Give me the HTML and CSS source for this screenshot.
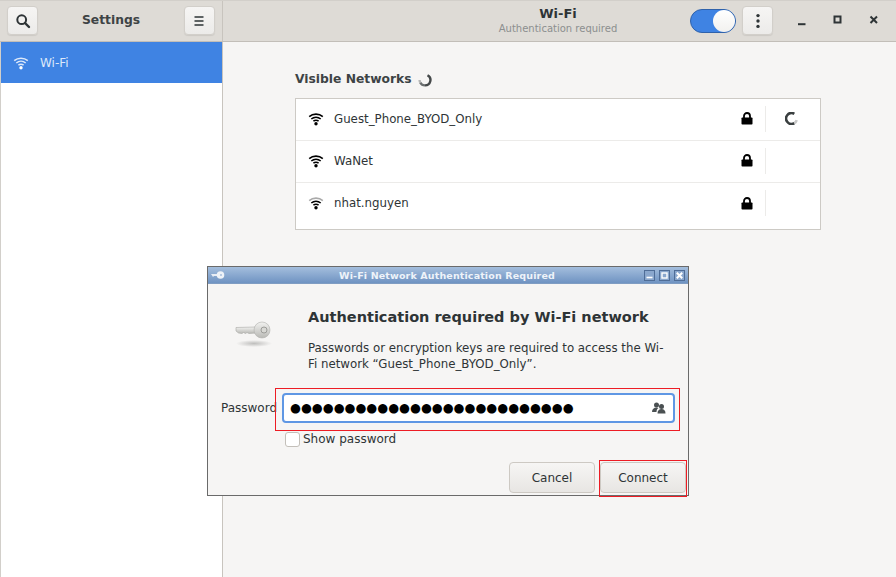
FILE: index.html
```html
<!DOCTYPE html>
<html lang="en">
<head>
<meta charset="utf-8">
<title>Settings - Wi-Fi</title>
<link rel="stylesheet" href="styles.css">
</head>
<body>
<div class="window">
  <header class="headerbar">
    <div class="head-left">
      <button class="hbtn"><svg width="16" height="16" viewBox="0 0 16 16"><circle cx="6.700" cy="6.700" r="4.400" fill="none" stroke="#2e3436" stroke-width="2"/><path d="M10 10l4 4" stroke="#2e3436" stroke-width="2.400" stroke-linecap="round"/></svg></button>
      <span class="app-title">Settings</span>
      <button class="hbtn"><svg width="16" height="16" viewBox="0 0 16 16"><path d="M3.500 4h9M3.500 8h9M3.500 12h9" stroke="#2e3436" stroke-width="1.700"/></svg></button>
    </div>
    <div class="head-right">
      <div class="title-block">
        <div class="title">Wi-Fi</div>
        <div class="subtitle">Authentication required</div>
      </div>
      <div class="switch"><span class="knob"></span></div>
      <button class="hbtn dots"><svg width="16" height="16" viewBox="0 0 16 16"><circle cx="8" cy="2.600" r="1.700" fill="#2e3436"/><circle cx="8" cy="8" r="1.700" fill="#2e3436"/><circle cx="8" cy="13.400" r="1.700" fill="#2e3436"/></svg></button>
      <div class="wm">
        <svg width="12" height="12" viewBox="0 0 12 12"><path d="M2 9.200h7.500" stroke="#2e3436" stroke-width="2"/></svg>
        <svg width="12" height="12" viewBox="0 0 12 12"><rect x="2.500" y="1.500" width="6" height="6" fill="none" stroke="#2e3436" stroke-width="2"/></svg>
        <svg width="12" height="12" viewBox="0 0 12 12"><path d="M2.500 1.500l6.500 6.500M9 1.500l-6.500 6.500" stroke="#2e3436" stroke-width="2"/></svg>
      </div>
    </div>
  </header>
  <div class="body">
    <aside class="sidebar">
      <div class="side-item">
        <svg class="wifi" width="16" height="16" viewBox="0 0 16 16"><path d="M1.200 5.600C5 2.300 11 2.300 14.800 5.600M3.300 8C6 5.800 10 5.800 12.700 8M5.400 10.200C6.900 9.100 9.100 9.100 10.600 10.200" fill="none" stroke="#dce8fa" stroke-width="1.500"/><circle cx="8" cy="12.800" r="1.700" fill="#fff"/></svg>
        <span>Wi-Fi</span>
      </div>
    </aside>
    <main class="content">
      <h2 class="section"><span>Visible Networks</span>
        <svg width="14" height="14" viewBox="0 0 14 14"><path d="M9.500 2.200A5.400 5.400 0 0 1 7 12.400" fill="none" stroke="#45494a" stroke-width="2.400"/><path d="M7 12.400A5.400 5.400 0 0 1 2.200 9.500" fill="none" stroke="#6a6e6f" stroke-width="2.400"/><path d="M2.200 9.500A5.400 5.400 0 0 1 1.600 7" fill="none" stroke="#b5b6b5" stroke-width="2.400"/></svg>
      </h2>
      <ul class="networks">
        <li class="net">
          <svg class="wifi" width="16" height="16" viewBox="0 0 16 16"><path d="M1.200 5.600C5 2.300 11 2.300 14.800 5.600M3.300 8C6 5.800 10 5.800 12.700 8M5.400 10.200C6.900 9.100 9.100 9.100 10.600 10.200" fill="none" stroke="#000" stroke-width="1.600"/><circle cx="8" cy="12.800" r="1.700"/></svg>
          <span class="name">Guest_Phone_BYOD_Only</span>
          <svg class="lock" width="12" height="13" viewBox="0 0 12 13"><path d="M3 6V4a3 3 0 0 1 6 0v2" fill="none" stroke="#000" stroke-width="1.800"/><rect x="0.500" y="5.500" width="11" height="7" rx="0.800"/></svg>
          <span class="spin"><svg width="13" height="13" viewBox="0 0 12 12"><path d="M8.600 1.700A5 5 0 1 0 8.600 10.300" fill="none" stroke="#3a3f40" stroke-width="2.400"/><path d="M8.600 10.300A5 5 0 0 0 10.800 7.500" fill="none" stroke="#c8c8c8" stroke-width="2.400"/></svg></span>
        </li>
        <li class="net">
          <svg class="wifi" width="16" height="16" viewBox="0 0 16 16"><path d="M1.200 5.600C5 2.300 11 2.300 14.800 5.600M3.300 8C6 5.800 10 5.800 12.700 8M5.400 10.200C6.900 9.100 9.100 9.100 10.600 10.200" fill="none" stroke="#000" stroke-width="1.600"/><circle cx="8" cy="12.800" r="1.700"/></svg>
          <span class="name">WaNet</span>
          <svg class="lock" width="12" height="13" viewBox="0 0 12 13"><path d="M3 6V4a3 3 0 0 1 6 0v2" fill="none" stroke="#000" stroke-width="1.800"/><rect x="0.500" y="5.500" width="11" height="7" rx="0.800"/></svg>
          <span class="spin"></span>
        </li>
        <li class="net">
          <svg class="wifi" width="16" height="16" viewBox="0 0 16 16"><path d="M1.200 5.600C5 2.300 11 2.300 14.800 5.600" fill="none" stroke="#aaa" stroke-width="1.600"/><path d="M3.300 8C6 5.800 10 5.800 12.700 8M5.400 10.200C6.900 9.100 9.100 9.100 10.600 10.200" fill="none" stroke="#000" stroke-width="1.600"/><circle cx="8" cy="12.800" r="1.700"/></svg>
          <span class="name">nhat.nguyen</span>
          <svg class="lock" width="12" height="13" viewBox="0 0 12 13"><path d="M3 6V4a3 3 0 0 1 6 0v2" fill="none" stroke="#000" stroke-width="1.800"/><rect x="0.500" y="5.500" width="11" height="7" rx="0.800"/></svg>
          <span class="spin"></span>
        </li>
      </ul>
    </main>
  </div>
</div>

<section class="dialog">
  <div class="dlg-title">
    <svg class="dlg-key" width="14" height="10" viewBox="0 0 14 10"><path d="M0 4h8v2H3L2 7z" fill="#e8edf4"/><circle cx="9.500" cy="5" r="3.800" fill="#eef2f7"/><circle cx="10" cy="5" r="1" fill="#a9bfdc"/></svg>
    <span class="dlg-caption">Wi-Fi Network Authentication Required</span>
    <span class="dlg-btns">
      <span class="dlg-btn"><svg width="9" height="9" viewBox="0 0 9 9"><path d="M1.500 6.500h6" stroke="#fff" stroke-width="1.600"/></svg></span>
      <span class="dlg-btn"><svg width="9" height="9" viewBox="0 0 9 9"><rect x="2" y="2" width="5" height="5" fill="none" stroke="#fff" stroke-width="1.400"/></svg></span>
      <span class="dlg-btn"><svg width="9" height="9" viewBox="0 0 9 9"><path d="M1.800 1.800l5.400 5.400M7.200 1.800l-5.400 5.400" stroke="#fff" stroke-width="2"/></svg></span>
    </span>
  </div>
  <div class="dlg-main">
    <div class="dlg-icon">
      <svg width="38" height="30" viewBox="0 0 38 30">
        <defs>
          <linearGradient id="k" x1="0" y1="0" x2="0" y2="1"><stop offset="0" stop-color="#f2f2f0"/><stop offset="1" stop-color="#b9b9b5"/></linearGradient>
          <radialGradient id="s"><stop offset="0" stop-color="#9a9a98" stop-opacity=".6"/><stop offset="1" stop-color="#9a9a98" stop-opacity="0"/></radialGradient>
        </defs>
        <ellipse cx="19" cy="24.500" rx="18" ry="3.500" fill="url(#s)"/>
        <path d="M1 8.500l20-.5v6l-7 .5-2-1-1.500 1-2-1-1.500 1-3.500-.5-2.500-2z" fill="url(#k)" stroke="#a8a8a4" stroke-width=".6"/>
        <circle cx="27" cy="11" r="8" fill="url(#k)" stroke="#b0b0ac" stroke-width=".6"/>
        <circle cx="29" cy="11" r="3" fill="#d8d8d4" stroke="#8e8e8a" stroke-width=".8"/>
      </svg>
    </div>
    <div class="dlg-text">
      <h1 class="dlg-head">Authentication required by Wi-Fi network</h1>
      <p class="dlg-para">Passwords or encryption keys are required to access the Wi-Fi network “Guest_Phone_BYOD_Only”.</p>
    </div>
  </div>
  <div class="pw-row">
    <label class="pw-label">Password</label>
    <div class="entry">
      <span class="pw-dots">●●●●●●●●●●●●●●●●●●●●●●●●●●</span>
      <svg width="14" height="12" viewBox="0 0 14 12"><circle cx="4.500" cy="3" r="2.500" fill="#4a5052"/><path d="M0 10c0-3 2-4.500 4.500-4.500 1 0 1.500.2 2 .5C5 7 4.500 8.500 4.500 10z" fill="#4a5052"/><circle cx="9.500" cy="4.500" r="2.500" fill="#4a5052"/><path d="M5.500 11.500c0-3 1.500-4.500 4-4.500s4 1.500 4 4.500z" fill="#4a5052"/></svg>
    </div>
    <span class="mark mark-pw"></span>
  </div>
  <label class="show"><span class="check"></span><span>Show password</span></label>
  <div class="actions">
    <button class="dbtn">Cancel</button>
    <button class="dbtn dbtn-connect">Connect<span class="mark mark-connect"></span></button>
  </div>
</section>
</body>
</html>
```
FILE: styles.css
```css
* { box-sizing: border-box; }
html, body { margin: 0; padding: 0; }
body {
  width: 896px;
  height: 577px;
  overflow: hidden;
  position: relative;
  font-family: "DejaVu Sans", sans-serif;
  font-size: 12px;
  color: #2e3436;
  background: #f6f5f4;
}
.window { height: 577px; display: flex; flex-direction: column; }

.headerbar {
  height: 42px;
  flex: none;
  display: flex;
  background: #dedbd6;
  border-top: 1px solid #d2cfca;
  border-bottom: 1px solid #c2beb8;
}
.head-left {
  width: 223px;
  flex: none;
  display: flex;
  align-items: center;
  justify-content: space-between;
  padding: 0 7px;
  border-right: 1px solid #c8c4be;
}
.head-right { flex: 1; display: flex; align-items: center; position: relative; }
.app-title { font-weight: bold; font-size: 12.3px; color: #3d4345; margin-top: -3px; }
.hbtn {
  width: 31px;
  height: 29px;
  margin-bottom: 1px;
  padding: 0;
  display: flex;
  align-items: center;
  justify-content: center;
  background: linear-gradient(#f6f5f4, #ecebe9);
  border: 1px solid #d2cfca;
  border-radius: 4px;
  box-shadow: 0 1px 1px rgba(0,0,0,.08);
}
.title-block {
  position: absolute;
  left: 223px;
  width: 224px;
  top: 4px;
  text-align: center;
}
.title { font-weight: bold; font-size: 13px; line-height: 17px; color: #2e3436; }
.subtitle { font-size: 10px; line-height: 14px; color: #8c8f8f; }
.switch {
  margin-left: 467px;
  width: 46px;
  height: 24px;
  margin-bottom: 1px;
  background: #3f83e3;
  border: 1px solid #2f62ab;
  border-radius: 12px;
  display: flex;
  justify-content: flex-end;
}
.knob {
  width: 22px;
  height: 22px;
  background: linear-gradient(#ffffff, #f2f1ef);
  border-radius: 50%;
}
.dots { margin-left: 6px; }
.wm {
  display: flex;
  gap: 24px;
  margin-left: 23px;
  align-items: center;
}

.body { flex: 1; display: flex; min-height: 0; }
.sidebar {
  width: 223px;
  flex: none;
  background: #fff;
  border-left: 1px solid #d2cfca;
  border-right: 1px solid #c8c4be;
}
.side-item {
  height: 41px;
  background: #3f83e3;
  color: #dce8fa;
  display: flex;
  align-items: center;
  gap: 11px;
  padding-left: 12px;
  font-size: 12px;
}
.content { flex: 1; padding: 28px 75px 0 72px; }
.section {
  margin: 0 0 9px;
  font-size: 12.3px;
  font-weight: bold;
  line-height: 19px;
  color: #3d4345;
  display: flex;
  align-items: center;
  gap: 6px;
}
.networks {
  list-style: none;
  margin: 0;
  padding: 0;
  width: 526px;
  background: #fff;
  border: 1px solid #cdcac5;
}
.net {
  height: 42px;
  display: flex;
  align-items: center;
  padding: 0 0 2px 12px;
  border-bottom: 1px solid #ecebe9;
  font-size: 11.8px;
  color: #2e3436;
}
.net:last-child { height: 46px; border-bottom: 0; padding-bottom: 6px; }
.name { margin-left: 10px; flex: 1; }
.lock { margin-right: 12px; }
.spin {
  width: 55px;
  height: 26px;
  padding-right: 3px;
  border-left: 1px solid #ecebe9;
  display: flex;
  align-items: center;
  justify-content: center;
}

.dialog {
  position: absolute;
  left: 207px;
  top: 266px;
  width: 482px;
  height: 230px;
  background: #f6f5f4;
  border: 1px solid #6a6a6a;
}
.dlg-title {
  height: 17px;
  display: flex;
  align-items: center;
  position: relative;
  background: linear-gradient(#a4bedd, #6f93c2);
  border-bottom: 1px solid #7f9cc2;
}
.dlg-key { margin-left: 3px; }
.dlg-caption {
  position: absolute;
  left: 0;
  right: 2px;
  text-align: center;
  font-size: 9.5px;
  font-weight: bold;
  letter-spacing: .14px;
  color: #eef3f9;
}
.dlg-btns { margin-left: auto; margin-right: 3px; display: flex; gap: 4px; position: relative; }
.dlg-btn {
  width: 11px;
  height: 11px;
  display: flex;
  align-items: center;
  justify-content: center;
  background: #8aa7cd;
  border: 1px solid #4f6d97;
}
.dlg-main { display: flex; height: 103px; }
.dlg-icon { margin: 35px 0 0 27px; width: 73px; flex: none; }
.dlg-text { width: 362px; padding-top: 24px; }
.dlg-head {
  margin: 0;
  font-size: 14.5px;
  line-height: 19px;
  font-weight: bold;
  color: #2e3436;
}
.dlg-para { margin: 13px 0 0; font-size: 11.8px; line-height: 16px; color: #2e3436; }
.pw-row {
  display: flex;
  align-items: center;
  padding-left: 13px;
  height: 30px;
  margin-top: 6px;
  position: relative;
}
.pw-label { width: 61px; flex: none; font-size: 12px; color: #2e3436; }
.entry {
  width: 393px;
  height: 30px;
  display: flex;
  align-items: center;
  justify-content: space-between;
  padding: 0 7px 0 6px;
  background: #fff;
  border: 2px solid #5f97e4;
  border-radius: 4px;
}
.pw-dots { font-size: 12.5px; line-height: 20px; color: #000; white-space: nowrap; }
.mark { position: absolute; border: 1px solid #ed1c24; pointer-events: none; }
.mark-pw { left: 67px; top: -5px; width: 405px; height: 43px; }
.show {
  display: flex;
  align-items: center;
  gap: 3px;
  margin: 8px 0 0 77px;
  height: 16px;
  color: #2e3436;
  font-size: 12px;
}
.check {
  width: 15px;
  height: 15px;
  background: #fff;
  border: 1px solid #c3bfb9;
  border-radius: 3px;
}
.actions { display: flex; justify-content: flex-end; gap: 5px; margin: 15px 2px 0 0; }
.dbtn {
  width: 86px;
  height: 31px;
  padding: 0;
  font: 12px "DejaVu Sans", sans-serif;
  color: #2e3436;
  background: linear-gradient(#f6f5f4, #e8e6e3);
  border: 1px solid #cdc9c3;
  border-radius: 4px;
  position: relative;
}
.mark-connect { left: -2px; top: -3px; width: 88px; height: 37px; }
```
